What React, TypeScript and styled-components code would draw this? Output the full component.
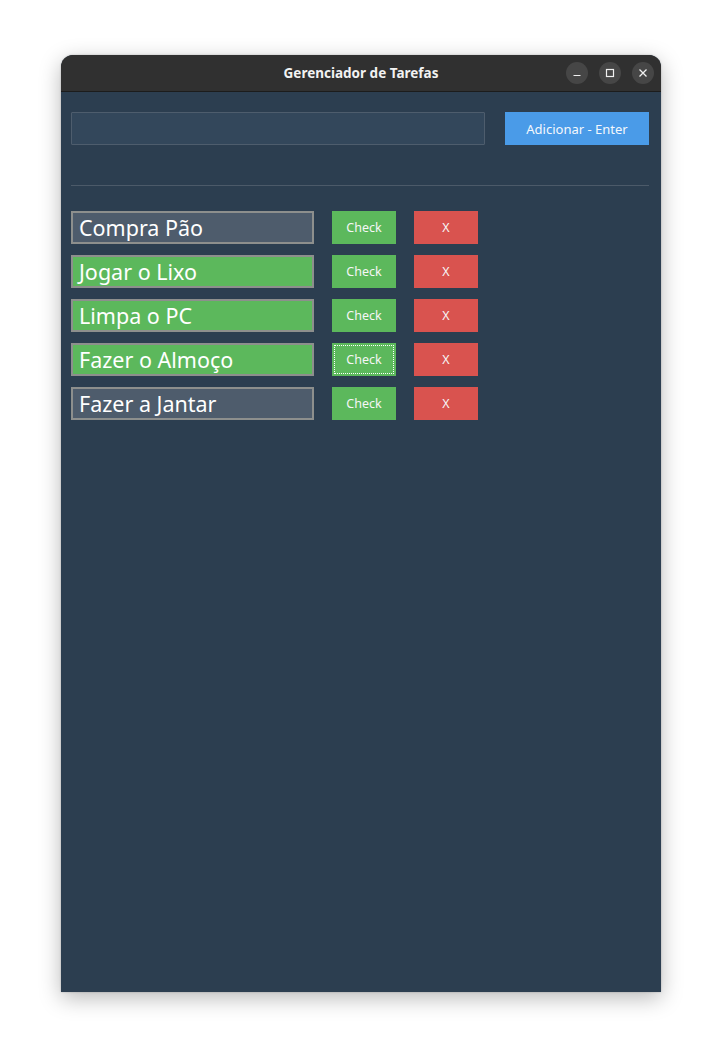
import React from "react";
import styled, { createGlobalStyle } from "styled-components";

const Global = createGlobalStyle`
  html, body { margin: 0; padding: 0; background: #ffffff; }
  * { box-sizing: border-box; }
`;

const Page = styled.div`
  width: 722px;
  height: 1059px;
  padding: 55px 0 0 61px;
  background: #ffffff;
`;

const Window = styled.div`
  width: 600px;
  height: 937px;
  display: flex;
  flex-direction: column;
  border-radius: 12px 12px 0 0;
  overflow: hidden;
  box-shadow: 0 6px 22px rgba(0, 0, 0, 0.28), 0 0 2px rgba(0, 0, 0, 0.25);
  background: #2c3e50;
`;

const TitleBar = styled.div`
  height: 37px;
  flex: none;
  position: relative;
  display: flex;
  align-items: center;
  justify-content: center;
  background: #303030;
  border-bottom: 1px solid #1c1c1c;
`;

const Title = styled.div`
  font-family: "Noto Sans", "Open Sans", sans-serif;
  font-weight: 700;
  font-size: 13.5px;
  color: #f2f2f2;
`;

const Controls = styled.div`
  position: absolute;
  right: 7px;
  top: 7px;
  display: flex;
  gap: 11px;
`;

const CtrlButton = styled.div`
  width: 22px;
  height: 22px;
  border-radius: 50%;
  background: #464646;
  display: flex;
  align-items: center;
  justify-content: center;
`;

const Body = styled.div`
  flex: 1;
  display: flex;
  flex-direction: column;
  padding: 20px 12px 0 10px;
`;

const TopRow = styled.div`
  display: flex;
  gap: 20px;
  height: 33px;
`;

const MainInput = styled.input`
  width: 414px;
  height: 33px;
  background: #33475b;
  border: 1px solid #4e5d6d;
  border-radius: 1px;
  outline: none;
  color: #fff;
  font-family: "Noto Sans", sans-serif;
  font-size: 16px;
`;

const AddButton = styled.button`
  width: 144px;
  height: 33px;
  border: none;
  background: #4a9be8;
  color: #f4f8fc;
  font-family: "Noto Sans", sans-serif;
  font-size: 13px;
  padding: 0;
`;

const Separator = styled.div`
  height: 1px;
  background: #4c5a69;
  margin: 40px 0 25px 0;
`;

const List = styled.div`
  display: flex;
  flex-direction: column;
  gap: 11px;
`;

const Row = styled.div`
  display: flex;
  align-items: center;
  height: 33px;
`;

const TaskField = styled.div<{ $done: boolean }>`
  width: 243px;
  height: 33px;
  margin-right: 18px;
  display: flex;
  align-items: center;
  padding-left: 6px;
  background: ${(p) => (p.$done ? "#5cb85c" : "#4e5c6c")};
  border: 2px solid #8d8f8d;
  color: #ffffff;
  font-family: "Noto Sans", sans-serif;
  font-size: 21.5px;
  white-space: nowrap;
`;

const ActionButton = styled.button<{ $kind: "check" | "del"; $focus?: boolean }>`
  width: 64px;
  height: 33px;
  border: none;
  padding: 0;
  position: relative;
  background: ${(p) => (p.$kind === "check" ? "#5cb85c" : "#d9534f")};
  color: #f6f6f6;
  font-family: "Noto Sans", sans-serif;
  font-size: 12.5px;
  margin-right: ${(p) => (p.$kind === "check" ? "18px" : "0")};
  outline: ${(p) => (p.$focus ? "1px dotted #ffffff" : "none")};
  outline-offset: -3px;
`;

const tasks = [
  { text: "Compra Pão", done: false },
  { text: "Jogar o Lixo", done: true },
  { text: "Limpa o PC", done: true },
  { text: "Fazer o Almoço", done: true, focus: true },
  { text: "Fazer a Jantar", done: false },
];

export default function App() {
  return (
    <Page>
      <Global />
      <Window>
        <TitleBar>
          <Title>Gerenciador de Tarefas</Title>
          <Controls>
            <CtrlButton>
              <svg width="10" height="10" viewBox="0 0 10 10">
                <path d="M1.5 7.5h7" stroke="#f0f0f0" strokeWidth="1.2" />
              </svg>
            </CtrlButton>
            <CtrlButton>
              <svg width="10" height="10" viewBox="0 0 10 10">
                <rect x="1.5" y="1.5" width="7" height="7" fill="none" stroke="#f0f0f0" strokeWidth="1.2" />
              </svg>
            </CtrlButton>
            <CtrlButton>
              <svg width="10" height="10" viewBox="0 0 10 10">
                <path d="M1.5 1.5l7 7M8.5 1.5l-7 7" stroke="#f0f0f0" strokeWidth="1.3" />
              </svg>
            </CtrlButton>
          </Controls>
        </TitleBar>
        <Body>
          <TopRow>
            <MainInput />
            <AddButton>Adicionar - Enter</AddButton>
          </TopRow>
          <Separator />
          <List>
            {tasks.map((t) => (
              <Row key={t.text}>
                <TaskField $done={t.done}>{t.text}</TaskField>
                <ActionButton $kind="check" $focus={t.focus}>Check</ActionButton>
                <ActionButton $kind="del">X</ActionButton>
              </Row>
            ))}
          </List>
        </Body>
      </Window>
    </Page>
  );
}
